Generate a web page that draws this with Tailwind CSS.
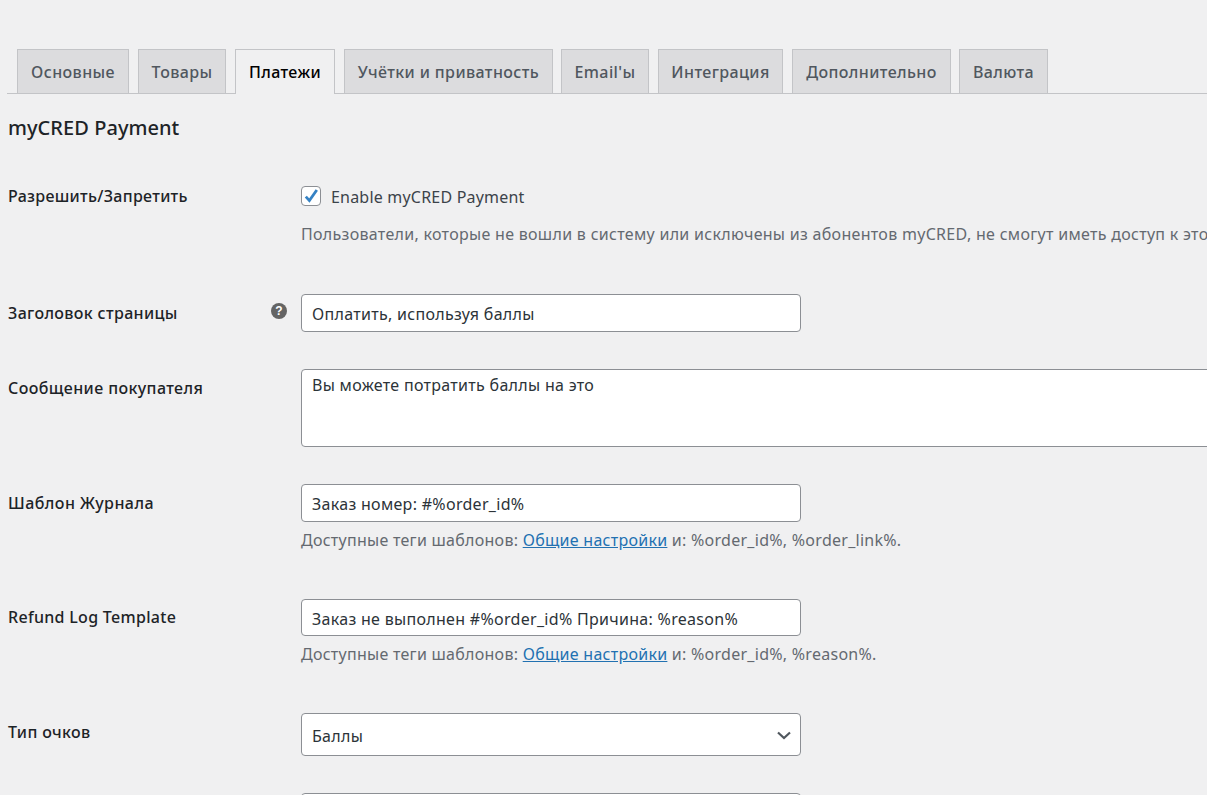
<!DOCTYPE html>
<html lang="ru">
<head>
  <meta charset="UTF-8">
  <title>Настройки WooCommerce</title>
  <script src="https://cdn.jsdelivr.net/npm/@tailwindcss/browser@4"></script>
</head>
<body class="bg-[#f0f0f1] h-[795px] overflow-hidden font-['Noto_Sans',sans-serif] text-[16px] text-[#3c434a]">
  <!-- tabs -->
  <div class="ml-[7px] mt-[49px] h-[45px] pl-[10px] flex gap-[9px] border-b border-[#c3c4c7] tracking-[0.4px]">
    <a class="w-[112px] h-[44px] flex items-center justify-center bg-[#dcdcde] border border-b-0 border-[#c3c4c7] font-medium text-[#50575e]">Основные</a>
    <a class="w-[88px] h-[44px] flex items-center justify-center bg-[#dcdcde] border border-b-0 border-[#c3c4c7] font-medium text-[#50575e]">Товары</a>
    <a class="w-[100px] h-[45px] flex items-center justify-center bg-[#f0f0f1] border border-b-0 border-[#c3c4c7] font-medium text-black">Платежи</a>
    <a class="w-[209px] h-[44px] flex items-center justify-center bg-[#dcdcde] border border-b-0 border-[#c3c4c7] font-medium text-[#50575e]">Учётки и приватность</a>
    <a class="w-[88px] h-[44px] flex items-center justify-center bg-[#dcdcde] border border-b-0 border-[#c3c4c7] font-medium text-[#50575e] ml-[-1px]">Email'ы</a>
    <a class="w-[125px] h-[44px] flex items-center justify-center bg-[#dcdcde] border border-b-0 border-[#c3c4c7] font-medium text-[#50575e]">Интеграция</a>
    <a class="w-[159px] h-[44px] flex items-center justify-center bg-[#dcdcde] border border-b-0 border-[#c3c4c7] font-medium text-[#50575e]">Дополнительно</a>
    <a class="w-[89px] h-[44px] flex items-center justify-center bg-[#dcdcde] border border-b-0 border-[#c3c4c7] font-medium text-[#50575e] ml-[-1px]">Валюта</a>
  </div>

  <div class="pl-[8px]">
    <h2 class="mt-[20px] h-[28px] leading-[28px] text-[20px] font-medium text-[#1d2327] tracking-[0.05px]">myCRED Payment</h2>

    <!-- enable -->
    <div class="mt-[44px] flex">
      <div class="w-[293px] shrink-0 h-[20px] leading-[20px] font-medium text-[#1d2327] tracking-[0.3px]">Разрешить/Запретить</div>
      <div class="min-w-0">
        <div class="flex items-center gap-[10px] h-[20px]">
          <span class="w-[20px] h-[20px] bg-white border border-[#8c8f94] rounded-[4px] flex items-center justify-center">
            <svg width="18" height="18" viewBox="0 0 18 18"><path d="M3.8 9.6 L7.4 13.6 L14.8 3" fill="none" stroke="#3582c4" stroke-width="2.8"/></svg>
          </span>
          <span class="tracking-[0.2px] pt-[1px]">Enable myCRED Payment</span>
        </div>
        <p class="mt-[17px] h-[22px] leading-[22px] text-[#646970] whitespace-nowrap tracking-[0.3px]">Пользователи, которые не вошли в систему или исключены из абонентов myCRED, не смогут иметь доступ к этому способу оплаты.</p>
      </div>
    </div>

    <!-- page title -->
    <div class="mt-[49px] flex">
      <div class="w-[263px] shrink-0 pt-[8px] h-[38px] leading-[22px] font-medium text-[#1d2327] tracking-[0.35px]">Заголовок страницы</div>
      <div class="w-[30px] shrink-0 pt-[9px]">
        <svg width="16" height="16" viewBox="0 0 16 16"><circle cx="8" cy="8" r="8" fill="#646464"/><text x="8" y="12.2" text-anchor="middle" font-size="12" font-weight="700" fill="#fff" font-family="Liberation Sans">?</text></svg>
      </div>
      <input value="Оплатить, используя баллы" class="w-[500px] h-[38px] px-[10px] pt-[2px] bg-white border border-[#8c8f94] rounded-[4px] text-[#2c3338] tracking-[0.3px]">
    </div>

    <!-- customer message -->
    <div class="mt-[37px] flex">
      <div class="w-[293px] shrink-0 pt-[8px] leading-[22px] font-medium text-[#1d2327] tracking-[0.4px]">Сообщение покупателя</div>
      <div class="w-[1000px] shrink-0 h-[78px] px-[10px] pt-[4px] leading-[22px] bg-white border border-[#8c8f94] rounded-[4px] text-[#2c3338] tracking-[0.3px]">Вы можете потратить баллы на это</div>
    </div>

    <!-- log template -->
    <div class="mt-[37px] flex">
      <div class="w-[293px] shrink-0 pt-[8px] leading-[22px] font-medium text-[#1d2327] tracking-[0.45px]">Шаблон Журнала</div>
      <div>
        <input value="Заказ номер: #%order_id%" class="block w-[500px] h-[38px] px-[10px] pt-[2px] bg-white border border-[#8c8f94] rounded-[4px] text-[#2c3338] tracking-[0.3px]">
        <p class="mt-[7px] h-[22px] leading-[22px] text-[#646970] tracking-[0.27px]">Доступные теги шаблонов: <a class="underline text-[#2271b1]">Общие настройки</a> и: %order_id%, %order_link%.</p>
      </div>
    </div>

    <!-- refund template -->
    <div class="mt-[48px] flex">
      <div class="w-[293px] shrink-0 pt-[7px] leading-[22px] font-medium text-[#1d2327] tracking-[0.3px]">Refund Log Template</div>
      <div>
        <input value="Заказ не выполнен #%order_id% Причина: %reason%" class="block w-[500px] h-[37px] px-[10px] pt-[2px] bg-white border border-[#8c8f94] rounded-[4px] text-[#2c3338] tracking-[0.3px]">
        <p class="mt-[7px] h-[22px] leading-[22px] text-[#646970] tracking-[0.27px]">Доступные теги шаблонов: <a class="underline text-[#2271b1]">Общие настройки</a> и: %order_id%, %reason%.</p>
      </div>
    </div>

    <!-- point type -->
    <div class="mt-[48px] flex">
      <div class="w-[293px] shrink-0 pt-[8px] leading-[22px] font-medium text-[#1d2327] tracking-[0.35px]">Тип очков</div>
      <div class="w-[500px] h-[43px] px-[10px] flex items-center justify-between bg-white border border-[#8c8f94] rounded-[4px] text-[#2c3338] tracking-[0.3px]">
        <span class="pt-[2px]">Баллы</span>
        <svg class="mr-[-1px] mt-[2px]" width="14" height="9" viewBox="0 0 14 9"><path d="M1 1.5 L7 7 L13 1.5" fill="none" stroke="#50575e" stroke-width="2.2"/></svg>
      </div>
    </div>

    <!-- next row, cut off by the window -->
    <div class="mt-[37px] ml-[293px] w-[500px] h-[38px] bg-white border border-[#8c8f94] rounded-[4px]"></div>
  </div>
</body>
</html>
